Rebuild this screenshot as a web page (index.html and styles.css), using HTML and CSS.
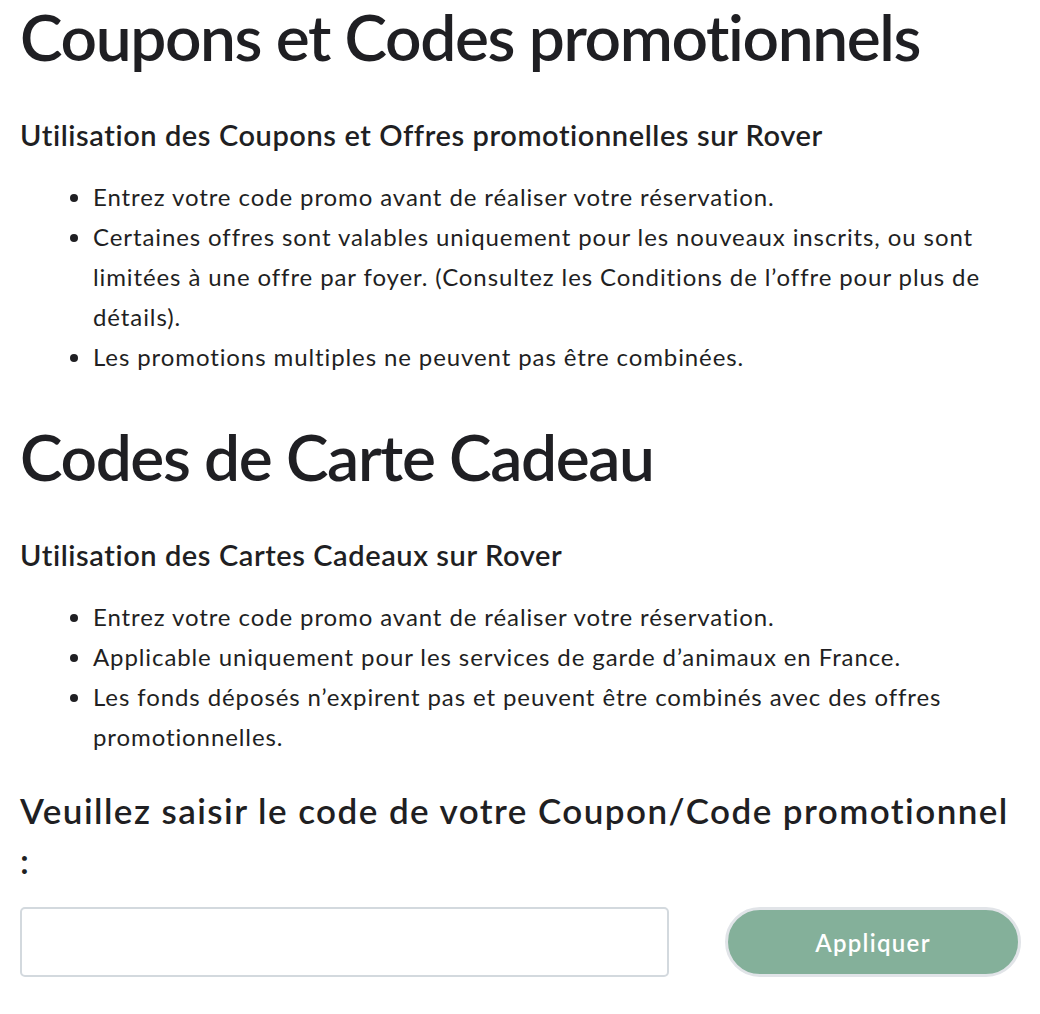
FILE: index.html
```html
<!DOCTYPE html>
<html lang="fr">
<head>
<meta charset="utf-8">
<title>Coupons et Codes promotionnels</title>
<link rel="stylesheet" href="styles.css">
</head>
<body>
<main class="page">
  <section class="block">
    <h1 class="title">Coupons et Codes promotionnels</h1>
    <h3 class="subtitle">Utilisation des Coupons et Offres promotionnelles sur Rover</h3>
    <ul class="list">
      <li>Entrez votre code promo avant de réaliser votre réservation.</li>
      <li>Certaines offres sont valables uniquement pour les nouveaux inscrits, ou sont limitées à une offre par foyer. (Consultez les Conditions de l’offre pour plus de détails).</li>
      <li>Les promotions multiples ne peuvent pas être combinées.</li>
    </ul>
  </section>
  <section class="block">
    <h1 class="title">Codes de Carte Cadeau</h1>
    <h3 class="subtitle">Utilisation des Cartes Cadeaux sur Rover</h3>
    <ul class="list">
      <li>Entrez votre code promo avant de réaliser votre réservation.</li>
      <li>Applicable uniquement pour les services de garde d’animaux en France.</li>
      <li>Les fonds déposés n’expirent pas et peuvent être combinés avec des offres promotionnelles.</li>
    </ul>
  </section>
  <form class="code-form">
    <label class="code-label" for="code">Veuillez saisir le code de votre Coupon/Code promotionnel :</label>
    <div class="code-row">
      <input class="code-input" id="code" type="text">
      <button class="apply-btn" type="button">Appliquer</button>
    </div>
  </form>
</main>
</body>
</html>
```

FILE: styles.css
```css
html, body {
  margin: 0;
  padding: 0;
  background: #ffffff;
}
body {
  font-family: "Lato", "Liberation Sans", sans-serif;
  color: #1f1f23;
  font-variant-ligatures: no-common-ligatures;
}
.page {
  padding: 1px 19px 0 20px;
}
.title {
  margin: 0;
  font-size: 64px;
  line-height: 72px;
  font-weight: 600;
  letter-spacing: -1.38px;
}
.subtitle {
  margin: 44px 0 0;
  font-size: 29px;
  line-height: 36px;
  font-weight: 600;
  letter-spacing: 0.58px;
}
.list {
  margin: 24px 0 0;
  padding-left: 73px;
  font-size: 24px;
  line-height: 40px;
  font-weight: 400;
  letter-spacing: 0.9px;
}
.block + .block {
  margin-top: 44px;
}
.code-form {
  margin-top: 28px;
}
.code-label {
  display: block;
  max-width: 992px;
  font-size: 35px;
  line-height: 50px;
  font-weight: 600;
  letter-spacing: 1.45px;
}
.code-row {
  margin-top: 22px;
  display: flex;
  align-items: center;
  gap: 56px;
}
.code-input {
  box-sizing: border-box;
  width: 649px;
  height: 70px;
  border: 2px solid #d3d9de;
  border-radius: 5px;
  background: #fff;
}
.apply-btn {
  box-sizing: border-box;
  width: 296px;
  height: 70px;
  border: 3px solid #e1e4e8;
  border-radius: 35px;
  background: #84b09a;
  color: #ffffff;
  font-family: inherit;
  font-size: 24px;
  font-weight: 600;
  letter-spacing: 1.3px;
}
```
